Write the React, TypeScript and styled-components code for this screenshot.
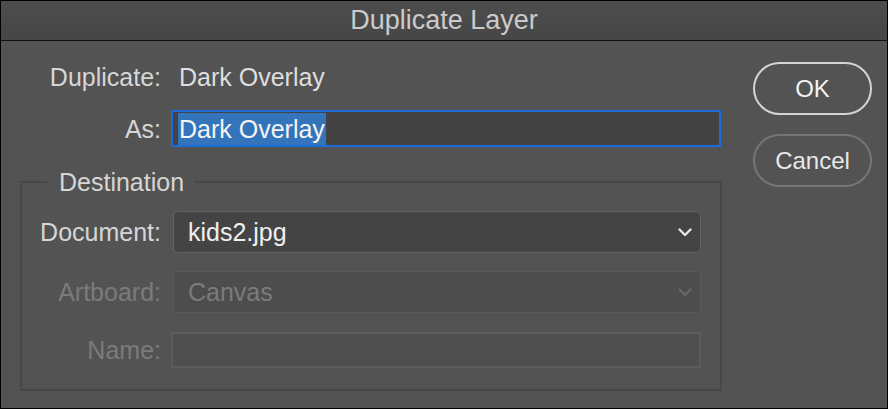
import React from "react";
import styled, { createGlobalStyle } from "styled-components";

const Global = createGlobalStyle`
  html, body { margin: 0; padding: 0; background: #000; }
  body { font-family: "Liberation Sans", Arial, sans-serif; }
  * { box-sizing: border-box; }
`;

const Window = styled.div`
  width: 888px;
  height: 409px;
  border: 1px solid #000;
  background: #535353;
  display: flex;
  flex-direction: column;
  overflow: hidden;
`;

const TitleBar = styled.div`
  height: 40px;
  flex: none;
  border-bottom: 1px solid #111;
  background: linear-gradient(#4d4d4d, #464646);
  color: #cbcbcb;
  font-size: 27px;
  line-height: 36px;
  text-align: center;
  padding-top: 1px;
`;

const Body = styled.div`
  flex: 1;
  display: flex;
  padding: 21px 0 0 19px;
`;

const FormColumn = styled.div`
  width: 702px;
  display: flex;
  flex-direction: column;
`;

const TopGrid = styled.div`
  display: grid;
  grid-template-columns: 141px 1fr;
  column-gap: 10px;
  row-gap: 18px;
  align-items: center;
  padding-right: 1px;
`;

const Label = styled.div<{ $dim?: boolean }>`
  font-size: 25px;
  line-height: 30px;
  text-align: right;
  color: ${(p) => (p.$dim ? "#7b7b7b" : "#d6d6d6")};
  white-space: nowrap;
`;

const Value = styled.div`
  font-size: 25px;
  line-height: 30px;
  color: #dedede;
  padding-left: 8px;
`;

const FocusInput = styled.div`
  height: 37px;
  border: 2px solid #1b6bd8;
  background: #434343;
  display: flex;
  align-items: center;
  padding-left: 5px;
`;

const Selection = styled.span`
  background: #3374ba;
  color: #f4f4f4;
  font-size: 25px;
  line-height: 32px;
  padding: 0 1px;
`;

const Fieldset = styled.fieldset`
  margin: 20px 0 0 0;
  padding: 0 19px 21px 0;
  border: 2px solid #474747;
  min-width: 0;
`;

const Legend = styled.legend`
  margin-left: 25px;
  padding: 0 10px 0 12px;
  font-size: 25px;
  line-height: 30px;
  color: #d6d6d6;
`;

const FieldGrid = styled.div`
  margin-top: 14px;
  display: grid;
  grid-template-columns: 139px 528px;
  column-gap: 12px;
  align-items: center;
`;

const Spacer = styled.div<{ $h: number }>`
  grid-column: 1 / -1;
  height: ${(p) => p.$h}px;
`;

const Select = styled.div<{ $disabled?: boolean }>`
  height: 42px;
  border-radius: 5px;
  border: 1.5px solid ${(p) => (p.$disabled ? "#5a5a5a" : "#626262")};
  background: ${(p) => (p.$disabled ? "#4d4d4d" : "#444444")};
  color: ${(p) => (p.$disabled ? "#7b7b7b" : "#f0f0f0")};
  font-size: 25px;
  display: flex;
  align-items: center;
  justify-content: space-between;
  padding: 0 8px 0 14px;
`;

const PlainInput = styled.div`
  height: 36px;
  margin-left: -2px;
  border: 2px solid #5b5b5b;
  background: #4f4f4f;
`;

const ButtonColumn = styled.div`
  margin-left: 31px;
  width: 119px;
  display: flex;
  flex-direction: column;
  gap: 19px;
`;

const PillButton = styled.button<{ $primary?: boolean }>`
  height: 53px;
  width: 119px;
  border-radius: 27px;
  background: transparent;
  border: 2px solid ${(p) => (p.$primary ? "#d4d4d4" : "#767676")};
  color: ${(p) => (p.$primary ? "#f2f2f2" : "#e8e8e8")};
  font-family: "Liberation Sans", Arial, sans-serif;
  font-size: 24px;
  padding: 0;
  cursor: default;
`;

const Chevron = ({ color }: { color: string }) => (
  <svg width="14" height="9" viewBox="0 0 14 9">
    <path d="M1.5 1.5 L7 7 L12.5 1.5" fill="none" stroke={color} strokeWidth="2.4" strokeLinecap="round" strokeLinejoin="round" />
  </svg>
);

export default function App() {
  return (
    <>
      <Global />
      <Window>
        <TitleBar>Duplicate Layer</TitleBar>
        <Body>
          <FormColumn>
            <TopGrid>
              <Label>Duplicate:</Label>
              <Value>Dark Overlay</Value>
              <Label>As:</Label>
              <FocusInput>
                <Selection>Dark Overlay</Selection>
              </FocusInput>
            </TopGrid>
            <Fieldset>
              <Legend>Destination</Legend>
              <FieldGrid>
                <Label>Document:</Label>
                <Select>
                  <span>kids2.jpg</span>
                  <Chevron color="#e8e8e8" />
                </Select>
                <Spacer $h={18} />
                <Label $dim>Artboard:</Label>
                <Select $disabled>
                  <span>Canvas</span>
                  <Chevron color="#676767" />
                </Select>
                <Spacer $h={19} />
                <Label $dim>Name:</Label>
                <PlainInput />
              </FieldGrid>
            </Fieldset>
          </FormColumn>
          <ButtonColumn>
            <PillButton $primary>OK</PillButton>
            <PillButton>Cancel</PillButton>
          </ButtonColumn>
        </Body>
      </Window>
    </>
  );
}
